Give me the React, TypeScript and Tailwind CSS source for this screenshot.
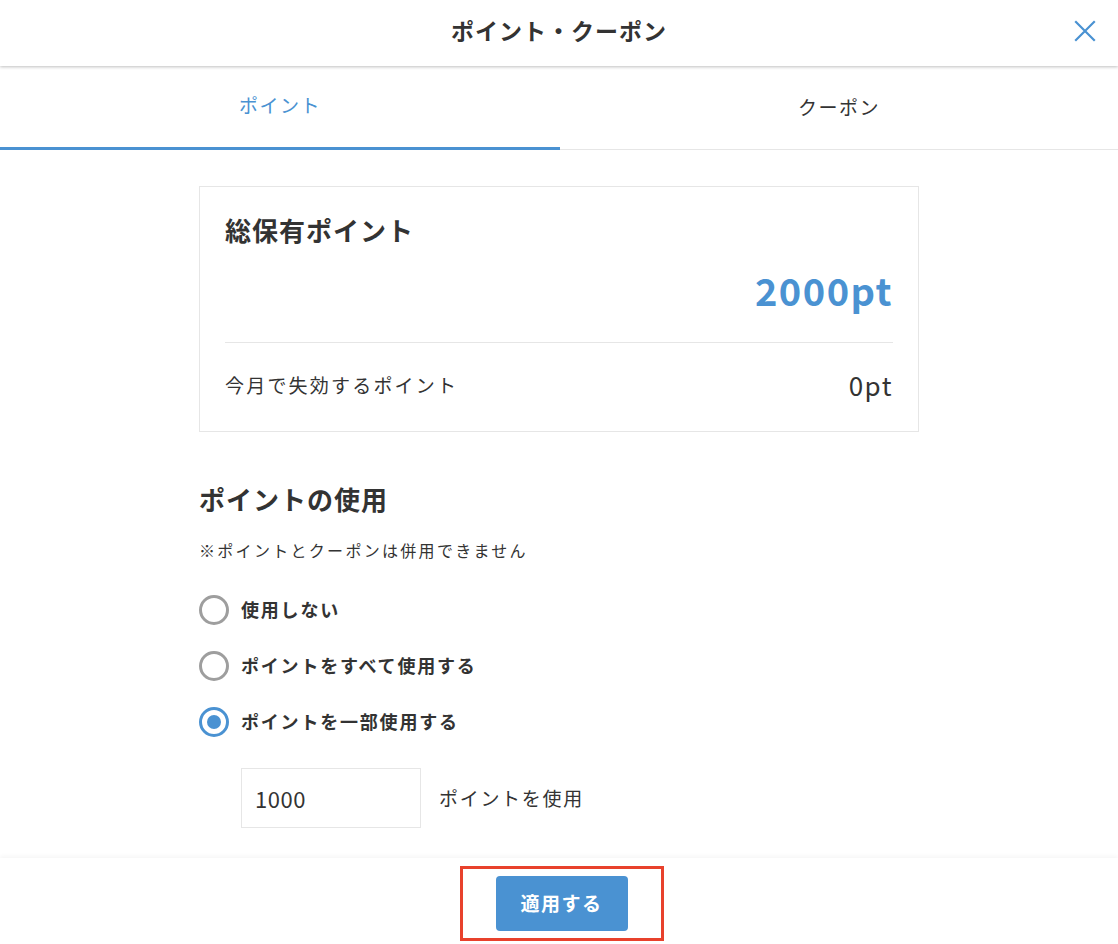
import React from "react";

function Radio({ checked, label }: { checked?: boolean; label: string }) {
  return (
    <div className="flex items-center h-[29px]">
      <div
        className={
          checked
            ? "w-[30px] h-[30px] rounded-full border-[3px] border-[#4a92d2] flex items-center justify-center"
            : "w-[30px] h-[30px] rounded-full border-[3px] border-[#9e9e9e]"
        }
      >
        {checked && <div className="w-[14px] h-[14px] rounded-full bg-[#4a92d2]" />}
      </div>
      <span className="ml-[12px] text-[18px] font-bold text-[#333] tracking-[1.8px]">{label}</span>
    </div>
  );
}

export default function App() {
  return (
    <div
      className="w-[1118px] h-[944px] bg-white flex flex-col overflow-hidden"
      style={{ fontFamily: '"Noto Sans CJK JP", "Noto Sans", sans-serif' }}
    >
      <header className="relative h-[66px] flex items-center justify-center shadow-[0_1px_3px_rgba(0,0,0,0.25)] z-10 shrink-0">
        <h1 className="text-[23px] font-bold text-[#333] tracking-[1px] mb-[6px]">ポイント・クーポン</h1>
        <button className="absolute right-[19px] top-[17px] w-[28px] h-[28px] flex items-center justify-center">
          <svg width="24" height="24" viewBox="0 0 24 24" fill="none" stroke="#4a92d2" strokeWidth="2.2" strokeLinecap="square">
            <path d="M3 3 L21 21 M21 3 L3 21" />
          </svg>
        </button>
      </header>
      <div className="flex h-[84px] shrink-0">
        <div className="w-[560px] flex items-center justify-center border-b-[3px] border-[#4a92d2] text-[19px] text-[#4a92d2] tracking-[1.5px] pb-[2px]">
          ポイント
        </div>
        <div className="flex-1 flex items-center justify-center border-b border-[#e6e6e6] text-[19px] text-[#333] tracking-[1.5px]">
          クーポン
        </div>
      </div>
      <main className="flex-1 flex flex-col items-center">
        <div className="w-[720px]">
          <section className="mt-[36px] border border-[#e6e6e6] px-[25px] pt-[27px] pb-[28px]">
            <h2 className="text-[26px] font-bold text-[#333] leading-[32px] tracking-[1px]">総保有ポイント</h2>
            <div className="text-right text-[38px] font-bold text-[#4a92d2] leading-[48px] mt-[20px] tracking-[1.5px]">2000pt</div>
            <div className="border-t border-[#e6e6e6] mt-[28px]" />
            <div className="flex items-center justify-between mt-[24px]">
              <span className="text-[19px] text-[#333] tracking-[2.2px]">今月で失効するポイント</span>
              <span className="text-[26px] text-[#333] tracking-[1.5px] leading-[36px]">0pt</span>
            </div>
          </section>
          <h2 className="mt-[51px] text-[26px] font-bold text-[#333] leading-[32px] tracking-[1px]">ポイントの使用</h2>
          <p className="mt-[24px] text-[16px] text-[#333] leading-[22px] tracking-[2.3px]">※ポイントとクーポンは併用できません</p>
          <div className="mt-[34px] flex flex-col gap-[27px]">
            <Radio label="使用しない" />
            <Radio label="ポイントをすべて使用する" />
            <Radio checked label="ポイントを一部使用する" />
          </div>
          <div className="mt-[32px] ml-[42px] flex items-center">
            <div className="w-[180px] h-[60px] border border-[#e6e6e6] flex items-center pl-[13px] text-[22px] text-[#333] tracking-[0.5px]">1000</div>
            <span className="ml-[18px] text-[19px] text-[#333] tracking-[1.7px]">ポイントを使用</span>
          </div>
        </div>
      </main>
      <footer className="h-[86px] shrink-0 flex items-center justify-center shadow-[0_-2px_4px_rgba(0,0,0,0.04)]">
        <div className="border-[3px] border-[#e8412c] w-[204px] h-[75px] flex items-center justify-center mt-[4px] ml-[5px]">
          <button className="w-[132px] h-[55px] rounded-[4px] bg-[#4a92d2] text-white text-[19px] font-bold tracking-[1.5px]">適用する</button>
        </div>
      </footer>
    </div>
  );
}
